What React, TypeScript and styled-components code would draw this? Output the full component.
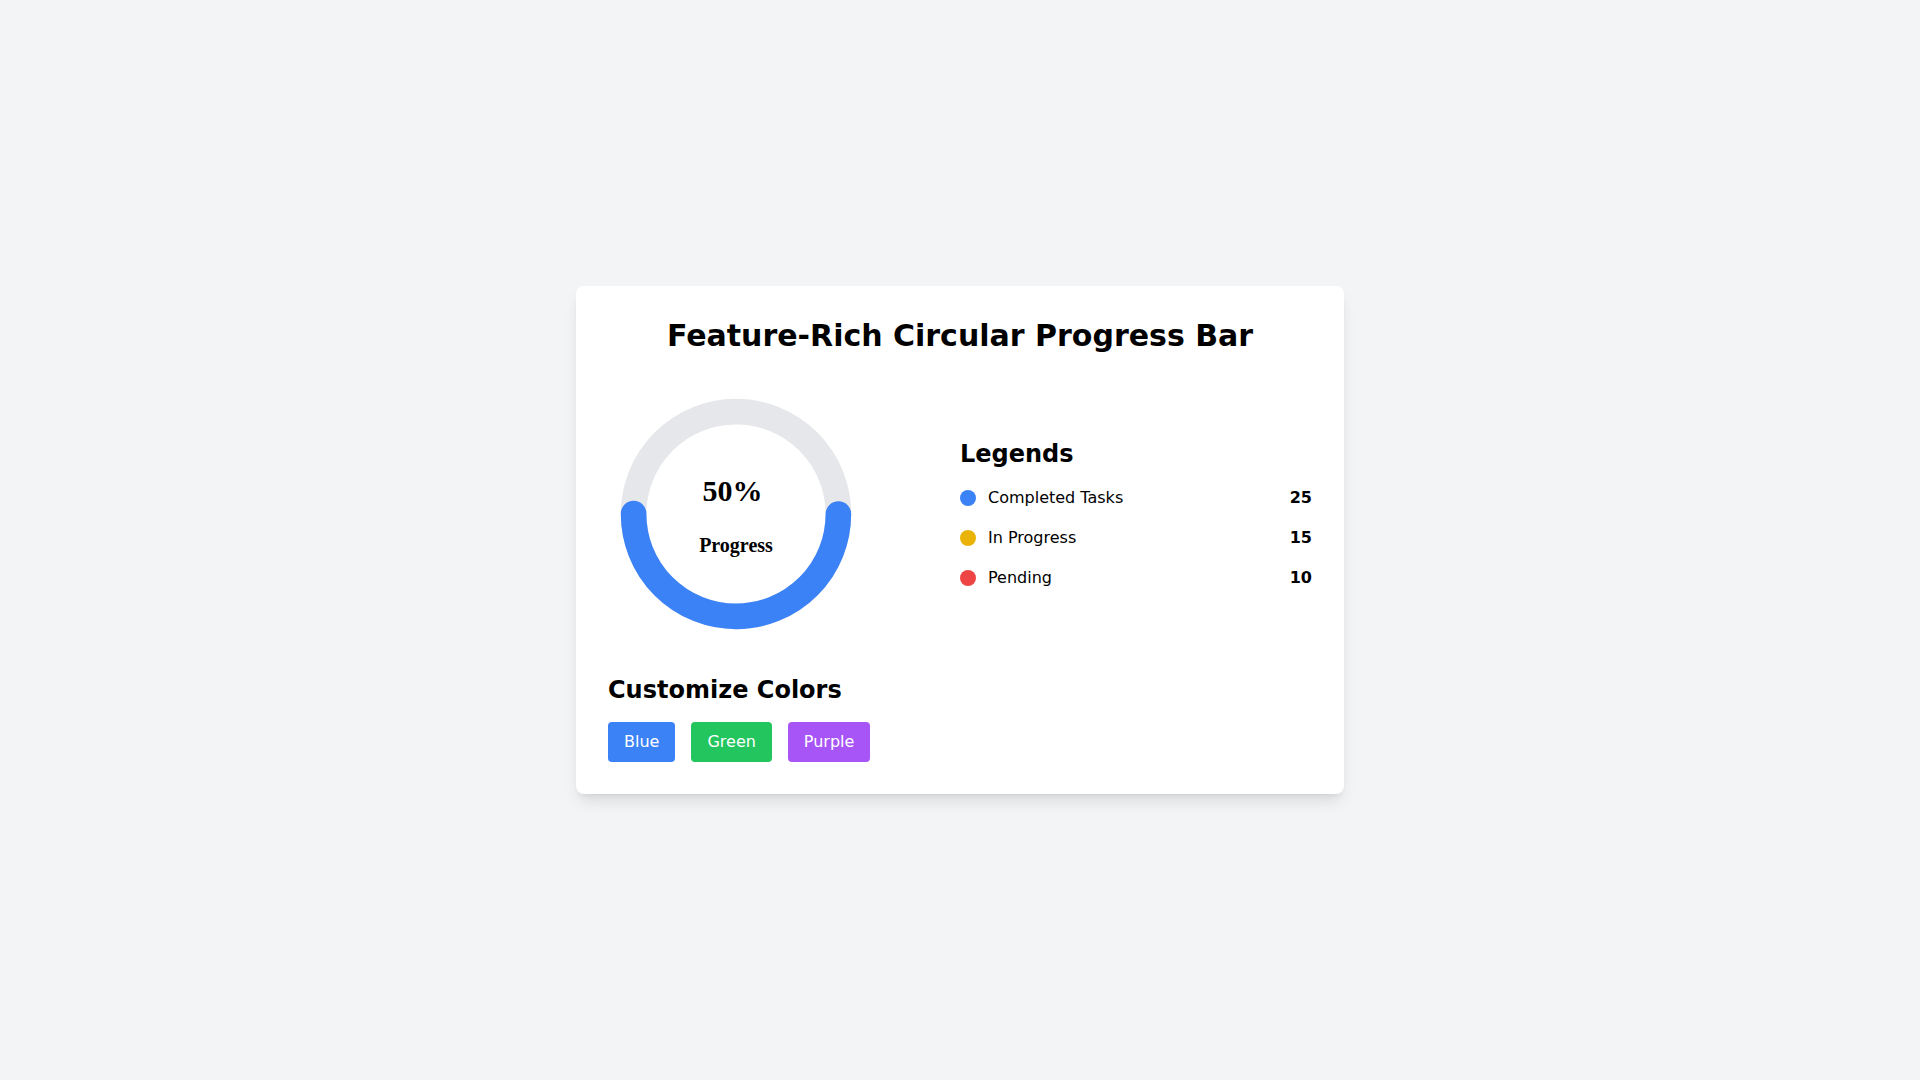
import React, { useState } from "react";
import styled, { createGlobalStyle } from "styled-components";

const GlobalStyle = createGlobalStyle`
  html, body {
    margin: 0;
    padding: 0;
  }
  body {
    font-family: "DejaVu Sans", sans-serif;
    background-color: #f3f4f6;
    color: #000;
  }
`;

const legends = [
  { label: "Completed Tasks", value: 25, color: "#3b82f6" },
  { label: "In Progress", value: 15, color: "#eab308" },
  { label: "Pending", value: 10, color: "#ef4444" },
];

const palette = [
  { name: "Blue", color: "#3b82f6" },
  { name: "Green", color: "#22c55e" },
  { name: "Purple", color: "#a855f7" },
];

const SIZE = 256;
const RADIUS = 102.4;
const STROKE = 25.6;
const CIRC = 2 * Math.PI * RADIUS;

const App: React.FC = () => {
  const [color, setColor] = useState("#3b82f6");
  const progress = 50;

  return (
    <Page>
      <GlobalStyle />
      <Card>
        <Title>Feature-Rich Circular Progress Bar</Title>
        <Body>
          <ChartColumn>
            <svg width={SIZE} height={SIZE} viewBox={`0 0 ${SIZE} ${SIZE}`}>
              <circle
                cx={SIZE / 2}
                cy={SIZE / 2}
                r={RADIUS}
                fill="none"
                stroke="#e5e7eb"
                strokeWidth={STROKE}
              />
              <circle
                cx={SIZE / 2}
                cy={SIZE / 2}
                r={RADIUS}
                fill="none"
                stroke={color}
                strokeWidth={STROKE}
                strokeLinecap="round"
                strokeDasharray={CIRC}
                strokeDashoffset={CIRC * (1 - progress / 100)}
              />
              <ChartValue x={124.5} y={115} textAnchor="middle">
                {progress}%
              </ChartValue>
              <ChartLabel x={128} y={166} textAnchor="middle">
                Progress
              </ChartLabel>
            </svg>
          </ChartColumn>
          <LegendColumn>
            <SectionTitle>Legends</SectionTitle>
            {legends.map((item) => (
              <LegendRow key={item.label}>
                <LegendName>
                  <Dot $color={item.color} />
                  {item.label}
                </LegendName>
                <LegendValue>{item.value}</LegendValue>
              </LegendRow>
            ))}
          </LegendColumn>
        </Body>
        <Customize>
          <SectionTitle>Customize Colors</SectionTitle>
          <ButtonRow>
            {palette.map((p) => (
              <ColorButton key={p.name} $bg={p.color} onClick={() => setColor(p.color)}>
                {p.name}
              </ColorButton>
            ))}
          </ButtonRow>
        </Customize>
      </Card>
    </Page>
  );
};

const Page = styled.div`
  min-height: 100vh;
  display: flex;
  align-items: center;
  justify-content: center;
`;

const Card = styled.div`
  width: 768px;
  box-sizing: border-box;
  padding: 32px;
  background: #fff;
  border-radius: 8px;
  box-shadow: 0 10px 15px -3px rgba(0, 0, 0, 0.1),
    0 4px 6px -4px rgba(0, 0, 0, 0.1);
`;

const Title = styled.h1`
  margin: 0 0 32px;
  font-size: 30px;
  line-height: 36px;
  font-weight: 700;
  text-align: center;
`;

const Body = styled.div`
  display: flex;
  align-items: center;
`;

const ChartColumn = styled.div`
  flex: 1;
  display: flex;

  svg {
    display: block;
  }
`;

const ChartValue = styled.text`
  font-family: "Liberation Serif", serif;
  font-size: 30px;
  font-weight: 700;
  fill: #000;
`;

const ChartLabel = styled.text`
  font-family: "Liberation Serif", serif;
  font-size: 20px;
  font-weight: 700;
  fill: #000;
`;

const LegendColumn = styled.div`
  flex: 1;
`;

const SectionTitle = styled.h2`
  margin: 0 0 16px;
  font-size: 24px;
  line-height: 32px;
  font-weight: 700;
`;

const LegendRow = styled.div`
  display: flex;
  align-items: center;
  justify-content: space-between;
  font-size: 16px;
  line-height: 24px;

  & + & {
    margin-top: 16px;
  }
`;

const LegendName = styled.div`
  display: flex;
  align-items: center;
`;

const Dot = styled.span<{ $color: string }>`
  width: 16px;
  height: 16px;
  border-radius: 50%;
  margin-right: 12px;
  background: ${(p) => p.$color};
`;

const LegendValue = styled.span`
  font-weight: 700;
`;

const Customize = styled.div`
  margin-top: 32px;
`;

const ButtonRow = styled.div`
  display: flex;
  gap: 16px;
`;

const ColorButton = styled.button<{ $bg: string }>`
  padding: 8px 16px;
  border: none;
  border-radius: 4px;
  background: ${(p) => p.$bg};
  color: #fff;
  font-family: "DejaVu Sans", sans-serif;
  font-size: 16px;
  line-height: 24px;
  cursor: pointer;
`;

export default App;
